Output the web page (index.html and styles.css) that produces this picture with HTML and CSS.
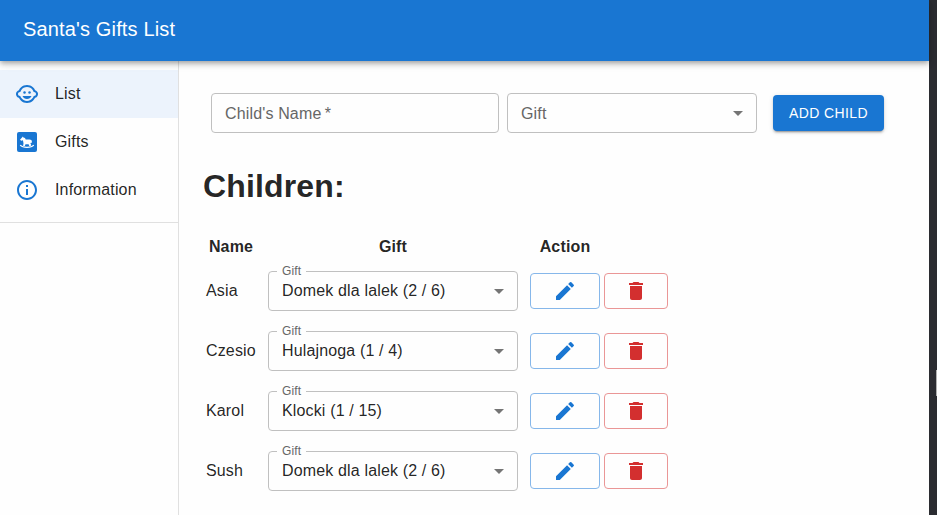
FILE: index.html
```html
<!DOCTYPE html>
<html lang="en">
<head>
<meta charset="utf-8">
<title>Santa's Gifts List</title>
<link rel="stylesheet" href="styles.css">
</head>
<body>
<svg class="defs" aria-hidden="true">
  <symbol id="arrow" viewBox="0 0 24 24"><path d="M7 10l5 5 5-5z"/></symbol>
  <symbol id="edit" viewBox="0 0 24 24"><path d="M3 17.25V21h3.75L17.81 9.94l-3.75-3.75L3 17.25zM20.71 7.04c.39-.39.39-1.02 0-1.41l-2.34-2.34a.9959.9959 0 0 0-1.41 0l-1.83 1.83 3.75 3.75 1.83-1.83z"/></symbol>
  <symbol id="trash" viewBox="0 0 24 24"><path d="M6 19c0 1.1.9 2 2 2h8c1.1 0 2-.9 2-2V7H6v12zM19 4h-3.5l-1-1h-5l-1 1H5v2h14V4z"/></symbol>
</svg>
<div class="app">
  <header class="bar">Santa's Gifts List</header>
  <div class="body">
    <nav class="side">
      <a class="item active"><svg class="icon" viewBox="0 0 24 24"><circle cx="14.5" cy="10.5" r="1.25"/><circle cx="9.5" cy="10.5" r="1.25"/><path d="M22.94 12.66c.04-.21.06-.43.06-.66s-.02-.45-.06-.66c-.25-1.51-1.36-2.74-2.81-3.17-.53-1.12-1.28-2.1-2.19-2.91C16.36 3.85 14.28 3 12 3s-4.36.85-5.94 2.26c-.92.81-1.67 1.8-2.19 2.91-1.45.43-2.56 1.65-2.81 3.17-.04.21-.06.43-.06.66s.02.45.06.66c.25 1.51 1.36 2.74 2.81 3.17.52 1.11 1.27 2.09 2.17 2.89C7.62 20.14 9.71 21 12 21s4.38-.86 5.97-2.28c.9-.8 1.65-1.79 2.17-2.89 1.44-.43 2.55-1.65 2.8-3.17zM19 14c-.1 0-.19-.02-.29-.03-.2.67-.49 1.29-.86 1.86C16.6 17.74 14.45 19 12 19s-4.6-1.26-5.85-3.17c-.37-.57-.66-1.19-.86-1.86-.1.01-.19.03-.29.03-1.1 0-2-.9-2-2s.9-2 2-2c.1 0 .19.02.29.03.2-.67.49-1.29.86-1.86C7.4 6.26 9.55 5 12 5s4.6 1.26 5.85 3.17c.37.57.66 1.19.86 1.86.1-.01.19-.03.29-.03 1.1 0 2 .9 2 2s-.9 2-2 2zM7.5 14c.76 1.77 2.49 3 4.5 3s3.74-1.23 4.5-3h-9z"/></svg>List</a>
      <a class="item"><svg class="icon" viewBox="0 0 24 24"><rect x="2" y="2" width="20" height="20" rx="2"/><path class="horse" d="M5 9.700L7.900 6.500l.5.9c1.300 0 2 .7 2.300 2.100h3.800c1.500 0 2.400.8 2.400 2.200v1.100h-.9l-.6.500.8 1.700-.6.900h-1.300l-.7-1.600h-3.100l-.7 1.600H8.100l.4-2.700-.6-2.900-1.600.5z"/><path class="rocker" d="M5.200 15.100C7.800 18 16.200 18 18.800 15.100"/></svg>Gifts</a>
      <a class="item"><svg class="icon" viewBox="0 0 24 24"><path d="M11 7h2v2h-2zm0 4h2v6h-2zm1-9C6.480 2 2 6.480 2 12s4.480 10 10 10 10-4.480 10-10S17.520 2 12 2zm0 18c-4.410 0-8-3.590-8-8s3.590-8 8-8 8 3.590 8 8-3.590 8-8 8z"/></svg>Information</a>
    </nav>
    <main class="main">
      <form class="form">
        <div class="field name">Child's Name&thinsp;*</div>
        <div class="field gift">Gift<svg class="icon arrow"><use href="#arrow"/></svg></div>
        <button class="add" type="button">ADD CHILD</button>
      </form>
      <h1>Children:</h1>
      <div class="table">
        <div class="row head"><b>Name</b><b>Gift</b><b class="action">Action</b></div>
        <div class="row"><span>Asia</span><div class="field gift"><span class="label">Gift</span>Domek dla lalek (2 / 6)<svg class="icon arrow"><use href="#arrow"/></svg></div><div class="buttons"><button class="edit" type="button"><svg class="icon"><use href="#edit"/></svg></button><button class="delete" type="button"><svg class="icon"><use href="#trash"/></svg></button></div></div>
        <div class="row"><span>Czesio</span><div class="field gift"><span class="label">Gift</span>Hulajnoga (1 / 4)<svg class="icon arrow"><use href="#arrow"/></svg></div><div class="buttons"><button class="edit" type="button"><svg class="icon"><use href="#edit"/></svg></button><button class="delete" type="button"><svg class="icon"><use href="#trash"/></svg></button></div></div>
        <div class="row"><span>Karol</span><div class="field gift"><span class="label">Gift</span>Klocki (1 / 15)<svg class="icon arrow"><use href="#arrow"/></svg></div><div class="buttons"><button class="edit" type="button"><svg class="icon"><use href="#edit"/></svg></button><button class="delete" type="button"><svg class="icon"><use href="#trash"/></svg></button></div></div>
        <div class="row"><span>Sush</span><div class="field gift"><span class="label">Gift</span>Domek dla lalek (2 / 6)<svg class="icon arrow"><use href="#arrow"/></svg></div><div class="buttons"><button class="edit" type="button"><svg class="icon"><use href="#edit"/></svg></button><button class="delete" type="button"><svg class="icon"><use href="#trash"/></svg></button></div></div>
      </div>
    </main>
  </div>
</div>
<div class="edge"><div class="thumb"></div></div>
</body>
</html>
```
FILE: styles.css
```css
* { box-sizing: border-box; }
body {
  margin: 0;
  display: flex;
  height: 515px;
  overflow: hidden;
  background: #fefefe;
  color: rgba(0, 0, 0, .87);
  font: 16px/24px "Liberation Sans", Arial, sans-serif;
  letter-spacing: .15px;
}
.defs { position: absolute; width: 0; height: 0; }
.app { width: 929px; display: flex; flex-direction: column; }
.bar {
  height: 61px;
  padding: 13px 23px 0;
  background: #1976d2;
  color: #fff;
  font-size: 20px;
  line-height: 32px;
  z-index: 1;
  box-shadow: 0 2px 4px -1px rgba(0,0,0,.2), 0 4px 5px rgba(0,0,0,.14), 0 1px 10px rgba(0,0,0,.12);
}
.body { display: flex; flex: 1; }
.side { width: 179px; border-right: 1px solid #e0e0e0; padding-top: 9px; }
.side::after { content: ""; display: block; margin-top: 8px; border-top: 1px solid #e0e0e0; }
.item { display: flex; align-items: center; height: 48px; padding-left: 15px; gap: 16px; }
.item .icon { fill: #1976d2; }
.active { background: #ecf3fc; }
.icon { width: 24px; height: 24px; flex: none; fill: currentColor; }
.icon .horse { fill: #fff; }
.icon .rocker { fill: none; stroke: #fff; stroke-width: 1.2; }
.main { padding: 32px 24px 0; flex: 1; }
.form { display: flex; align-items: center; padding-left: 8px; height: 40px; }
.field {
  position: relative;
  display: flex;
  align-items: center;
  height: 40px;
  padding: 0 6px 0 13px;
  border: 1px solid #c0c0c0;
  border-radius: 4px;
}
.form .field { color: #666; margin-right: 8px; line-height: 26px; padding-top: 1px; }
.form .gift { margin-right: 16px; }
.form .arrow { margin-top: -1px; }
.name { width: 288px; }
.gift { width: 250px; }
.arrow { margin-left: auto; fill: #757575; }
.label {
  position: absolute;
  left: 8px;
  top: -7px;
  padding: 0 5px;
  background: #fefefe;
  color: #666;
  font-size: 12px;
  line-height: 12px;
}
button { font: inherit; padding: 0; border-radius: 4px; height: 36px; background: none; }
.add {
  width: 111px;
  border: 0;
  background: #1976d2;
  color: #fff;
  font-size: 14px;
  letter-spacing: .4px;
  box-shadow: 0 3px 1px -2px rgba(0,0,0,.2), 0 2px 2px rgba(0,0,0,.14), 0 1px 5px rgba(0,0,0,.12);
}
h1 { margin: 32px 0 0; font-size: 32px; line-height: 42px; letter-spacing: .15px; }
.table { padding: 24px 0 0 3px; }
.row { display: grid; grid-template-columns: 50px 250px 138px; column-gap: 12px; align-items: center; height: 60px; }
.head { height: 30px; padding-top: 2px; text-align: center; }
.action { width: 70px; }
.buttons { display: flex; gap: 4px; }
.buttons button { display: flex; align-items: center; justify-content: center; }
.edit { width: 70px; border: 1px solid #86b7ea; color: #1976d2; }
.delete { width: 64px; border: 1px solid #ea9696; color: #d32f2f; }
.edge { width: 8px; background: #2b2c31; padding: 370px 0 0 7px; }
.thumb { height: 26px; background: #b0b0b0; }
```
